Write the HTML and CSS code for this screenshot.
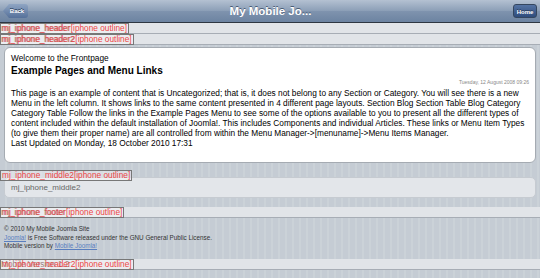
FILE: index.html
```html
<!doctype html>
<html lang="en">
  <head>
    <meta charset="UTF-8" />
    <meta name="viewport" content="width=device-width, initial-scale=1.0" />
    <title>My Mobile Joomla Site</title>
    <link rel="stylesheet" href="styles.css">
  </head>
  <body>
    <!-- iPhone toolbar -->
    <div class="toolbar">
      <a class="btn-back" href="#">Back</a>
      <h1 class="toolbar-title">My Mobile Jo...</h1>
      <a class="btn-home" href="#">Home</a>
    </div>

    <div class="mod-bar">
      <span class="mod-text">mj_iphone_header</span>
      <span class="outline-label">mj_iphone_header[iphone outline]</span>
    </div>
    <div class="mod-bar">
      <span class="mod-text">mj_iphone_header2</span>
      <span class="outline-label">mj_iphone_header2[iphone outline]</span>
    </div>

    <div class="content-box">
      <div class="page-heading">Welcome to the Frontpage</div>
      <h2 class="article-title">Example Pages and Menu Links</h2>
      <div class="article-date">Tuesday, 12 August 2008 09:26</div>
      <p class="article-text">This page is an example of content that is Uncategorized; that is, it does not belong to any Section or Category. You will see there is a new Menu in the left column. It shows links to the same content presented in 4 different page layouts. Section Blog Section Table Blog Category Category Table Follow the links in the Example Pages Menu to see some of the options available to you to present all the different types of content included within the default installation of Joomla!. This includes Components and individual Articles. These links or Menu Item Types (to give them their proper name) are all controlled from within the Menu Manager-&gt;[menuname]-&gt;Menu Items Manager.</p>
      <div class="article-modified">Last Updated on Monday, 18 October 2010 17:31</div>
    </div>

    <div class="module">
      <span class="outline-label">mj_iphone_middle2[iphone outline]</span>
      <div class="module-box">mj_iphone_middle2</div>
    </div>

    <div class="mod-bar footer-bar">
      <span class="mod-text">mj_iphone_footer</span>
      <span class="outline-label">mj_iphone_footer[iphone outline]</span>
    </div>

    <div class="site-footer">
      <div>&copy; 2010 My Mobile Joomla Site</div>
      <div><a href="#">Joomla!</a> is Free Software released under the GNU General Public License.</div>
      <div>Mobile version by <a href="#">Mobile Joomla!</a></div>
    </div>

    <div class="mod-bar bottom-bar">
      <span class="mod-text">Mobile Version 1.2</span>
      <span class="outline-label">mj_iphone_header2[iphone outline]</span>
    </div>
  </body>
</html>
```

FILE: styles.css
```css
body {
  margin: 0;
  font-family: "Liberation Sans", Arial, sans-serif;
  color: #000;
  /* iPhone pinstripe background */
  background: repeating-linear-gradient(to right, #c5ccd4 0, #c5ccd4 5px, #cbd2d8 5px, #cbd2d8 7px);
}

/* --- Toolbar --- */
.toolbar {
  height: 22px;
  display: flex;
  align-items: center;
  justify-content: space-between;
  padding: 0 3px;
  background: linear-gradient(#b4c1d2, #8b9eb6 50%, #7f93ae 51%, #6c83a1);
  border-bottom: 1px solid #2d3642;
}
.toolbar-title {
  margin: 0;
  font-size: 11.5px;
  font-weight: bold;
  color: #fff;
  text-shadow: 0 -1px 0 #4a5c75;
}
.btn-back,
.btn-home {
  height: 14px;
  line-height: 14px;
  font-size: 6px;
  font-weight: bold;
  color: #fff;
  text-decoration: none;
  text-shadow: 0 -1px 0 #2a3d5c;
}
.btn-back {
  width: 25px;
  padding-left: 3px;
  box-sizing: border-box;
  text-align: center;
  background: linear-gradient(#8fa5c3, #56719a);
  clip-path: polygon(0 50%, 6px 0, 100% 0, 100% 100%, 6px 100%);
  border-radius: 0 3px 3px 0;
}
.btn-home {
  width: 24px;
  text-align: center;
  background: linear-gradient(#5473a3, #2e4c7c);
  border: 1px solid #34465f;
  border-radius: 3px;
  box-sizing: border-box;
}

/* --- Module bars --- */
.mod-bar {
  position: relative;
  height: 10px;
  background: #e1e4e8;
  border-bottom: 1px solid #a7adb5;
}
.mod-text {
  display: block;
  padding-left: 1px;
  font-size: 8.3px;
  line-height: 10px;
  color: #6b3a3a;
}
.outline-label {
  position: absolute;
  top: 0;
  left: 0;
  padding: 0 1px;
  font-size: 8.3px;
  line-height: 9px;
  color: #ee4545;
  background: rgba(255, 255, 255, 0.35);
  border: 1px solid #777;
  white-space: nowrap;
}

/* --- Content --- */
.content-box {
  margin: 2px 4px 0;
  padding: 5px 6px 14px;
  background: #fff;
  border: 1px solid #a5abb2;
  border-radius: 6px;
}
.page-heading {
  font-size: 8.3px;
  line-height: 11px;
}
.article-title {
  margin: 0;
  font-size: 10px;
  line-height: 13px;
}
.article-date {
  margin-top: 2px;
  text-align: right;
  font-size: 5px;
  line-height: 7px;
  color: #888;
}
.article-text {
  margin: 2px 0 0;
  font-size: 8.3px;
  line-height: 10px;
}
.article-modified {
  font-size: 8.3px;
  line-height: 10px;
}

/* --- middle module --- */
.module {
  position: relative;
  margin-top: 7px;
  padding-top: 7px;
}
.module-box {
  margin: 0 4px;
  height: 19px;
  padding-left: 6px;
  font-size: 8px;
  line-height: 19px;
  color: #666;
  background: #e3e6ea;
  border: 1px solid #c6cbd1;
  border-radius: 5px;
}

.footer-bar {
  margin-top: 9px;
}

/* --- Footer --- */
.site-footer {
  padding: 7px 4px 0;
  font-size: 6.3px;
  line-height: 8.5px;
  color: #333;
}
.site-footer a {
  color: #5a7fbf;
}

.bottom-bar {
  margin-top: 8px;
}
```
